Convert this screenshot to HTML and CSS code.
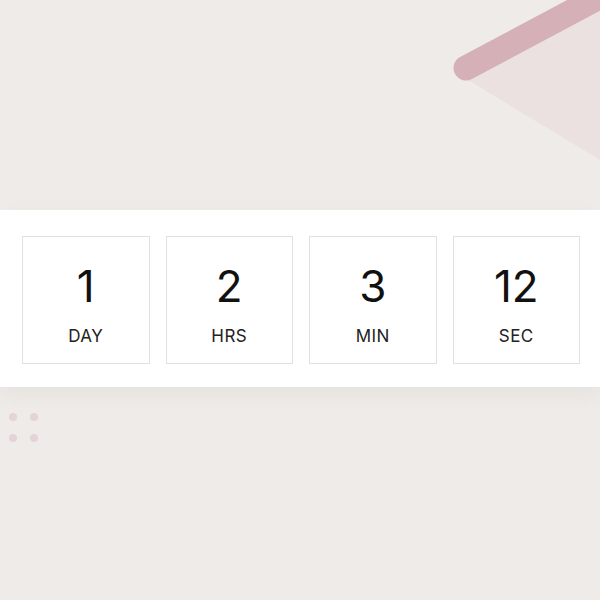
FILE: index.html
```html
<!DOCTYPE html>
<html>
<head>
<meta charset="utf-8">
<link rel="stylesheet" href="styles.css">
</head>
<body>
<div class="page">
  <div class="hero">
    <svg class="deco" width="600" height="210" viewBox="0 0 600 210">
      <polygon points="468,80 600,0 600,160" fill="#ebe1e1"/>
      <line x1="466" y1="68" x2="620" y2="-14" stroke="#d5b0b6" stroke-width="25" stroke-linecap="round"/>
    </svg>
  </div>
  <div class="band">
    <div class="card"><div class="num">1</div><div class="lbl">DAY</div></div>
    <div class="card"><div class="num">2</div><div class="lbl">HRS</div></div>
    <div class="card"><div class="num">3</div><div class="lbl">MIN</div></div>
    <div class="card"><div class="num">12</div><div class="lbl">SEC</div></div>
  </div>
  <div class="below">
    <div class="dots">
      <span class="dot"></span><span class="dot"></span>
      <span class="dot"></span><span class="dot"></span>
    </div>
  </div>
</div>
</body>
</html>
```
FILE: styles.css
```css
html, body {
  margin: 0;
  padding: 0;
  background: #eeebe8;
  font-family: "Inter", "Lato", sans-serif;
}
.page {
  width: 600px;
  height: 600px;
  overflow: hidden;
  background: #eeebe8;
}
.hero {
  position: relative;
  height: 210px;
}
.deco {
  position: absolute;
  top: 0;
  left: 0;
}
.band {
  background: #ffffff;
  height: 177px;
  box-sizing: border-box;
  padding: 26px 20px 0 22px;
  display: flex;
  gap: 16px;
  box-shadow: 0 8px 16px rgba(205, 195, 190, 0.2);
  position: relative;
}
.card {
  flex: 1;
  height: 128px;
  box-sizing: border-box;
  border: 1px solid #e2e0e0;
  display: flex;
  flex-direction: column;
  align-items: center;
}
.num {
  margin-top: 24px;
  font-size: 44px;
  line-height: 50px;
  font-weight: 400;
  color: #111;
}
.lbl {
  margin-top: 15px;
  font-size: 17px;
  line-height: 20px;
  font-weight: 400;
  color: #222;
  letter-spacing: 0.5px;
}
.below {
  padding: 26px 0 0 9px;
}
.dots {
  display: grid;
  grid-template-columns: 8px 8px;
  gap: 13px 13px;
}
.dot {
  width: 8px;
  height: 8px;
  border-radius: 50%;
  background: #e4d3d7;
}
```
